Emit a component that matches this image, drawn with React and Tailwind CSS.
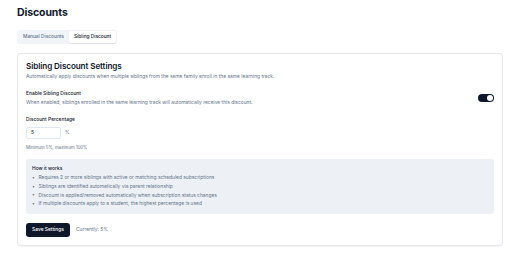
import React from "react";

export default function App() {
  const bullets = [
    "Requires 2 or more siblings with active or matching scheduled subscriptions",
    "Siblings are identified automatically via parent relationship",
    "Discount is applied/removed automatically when subscription status changes",
    "If multiple discounts apply to a student, the highest percentage is used",
  ];
  return (
    <div
      className="min-h-[255px] w-[520px] bg-white px-[17px] pt-[6px] text-[#0f172a]"
      style={{ fontFamily: "Inter, 'Liberation Sans', sans-serif" }}
    >
      <h1 className="text-[10.5px] font-bold leading-[14px] tracking-[-0.01em]">Discounts</h1>

      <div className="mt-[8px] inline-flex h-[14px] items-center rounded-[3px] bg-[#f1f5f9] p-[1px]">
        <div className="flex h-[12px] items-center px-[5px] text-[4.8px] font-medium text-[#64748b]">
          Manual Discounts
        </div>
        <div className="flex h-[12px] items-center rounded-[2px] bg-white px-[5px] text-[4.8px] font-medium text-[#0f172a] shadow-[0_0.5px_1px_rgba(0,0,0,0.08)]">
          Sibling Discount
        </div>
      </div>

      <div className="mt-[9px] rounded-[4px] border border-[#e5e7eb] bg-white px-[8px] pb-[8px] pt-[7px] shadow-[0_0.5px_1px_rgba(0,0,0,0.04)]">
        <h2 className="text-[8.1px] font-semibold leading-[10px] tracking-[-0.01em]">
          Sibling Discount Settings
        </h2>
        <p className="mt-[2px] text-[4.9px] leading-[7px] text-[#64748b]">
          Automatically apply discounts when multiple siblings from the same family enroll in the same learning track.
        </p>

        <div className="mt-[10px] flex items-center justify-between">
          <div>
            <div className="text-[4.9px] font-medium leading-[7px]">Enable Sibling Discount</div>
            <div className="mt-[2px] text-[4.9px] leading-[7px] text-[#64748b]">
              When enabled, siblings enrolled in the same learning track will automatically receive this discount.
            </div>
          </div>
          <div className="flex h-[8px] w-[16px] items-center justify-end rounded-full bg-[#0f172a] p-[1px]">
            <div className="h-[6px] w-[6px] rounded-full bg-white" />
          </div>
        </div>

        <div className="mt-[10px] text-[4.9px] font-medium leading-[7px]">Discount Percentage</div>
        <div className="mt-[4px] flex items-center">
          <div className="flex h-[12px] w-[35px] items-center rounded-[2px] border border-[#e2e8f0] pl-[4px] text-[4.9px]">
            5
          </div>
          <span className="ml-[4px] text-[4.9px] text-[#64748b]">%</span>
        </div>
        <div className="mt-[5px] text-[4.3px] leading-[7px] text-[#64748b]">Minimum 5%, maximum 100%</div>

        <div className="mt-[8px] rounded-[3px] bg-[#edf0f5] px-[6px] pb-[5px] pt-[5.5px]">
          <div className="text-[4.9px] font-medium leading-[7px]">How it works</div>
          <ul className="mt-[1.5px]">
            {bullets.map((b) => (
              <li key={b} className="flex h-[8.9px] items-center text-[4.9px] text-[#64748b]">
                <span className="w-[6.5px] text-[5px]">•</span>
                {b}
              </li>
            ))}
          </ul>
        </div>

        <div className="mt-[9px] flex items-center">
          <button className="flex h-[14.5px] w-[44px] items-center justify-center rounded-[3px] bg-[#0f172a] text-[4.9px] font-medium text-white">
            Save Settings
          </button>
          <span className="ml-[6px] text-[4.9px] text-[#64748b]">Currently: 5%</span>
        </div>
      </div>
    </div>
  );
}
